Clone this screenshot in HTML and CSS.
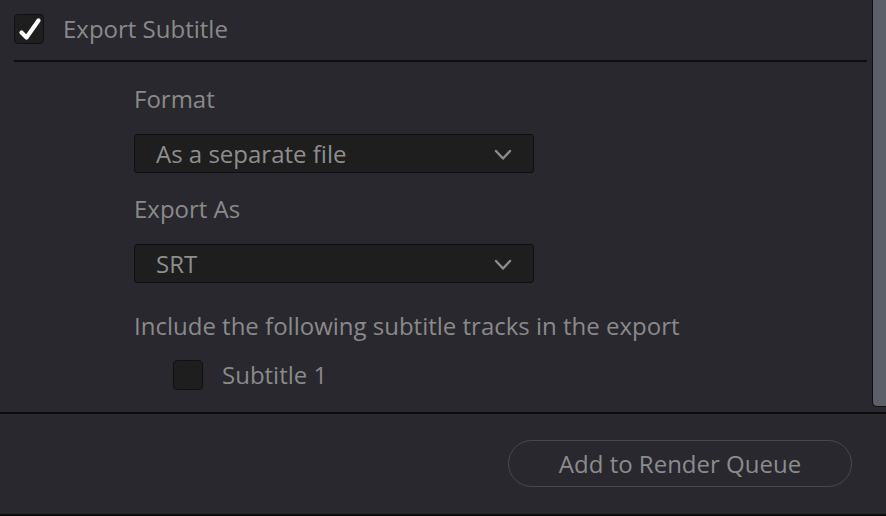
FILE: index.html
```html
<!DOCTYPE html>
<html>
<head>
<meta charset="utf-8">
<link rel="stylesheet" href="styles.css">
</head>
<body>
<div class="app">
  <div class="scroll-area">
    <div class="panel">
      <div class="header">
        <span class="checkbox checked">
          <svg width="30" height="30" viewBox="0 0 30 30"><path d="M7.5 18.5 L12.5 23.5 L24.5 6.5" fill="none" stroke="#ffffff" stroke-width="4.2" stroke-linecap="round" stroke-linejoin="round"/></svg>
        </span>
        <span class="title">Export Subtitle</span>
      </div>
      <div class="content">
        <div class="label">Format</div>
        <div class="select">
          <span class="select-text">As a separate file</span>
          <svg class="chevron" width="18" height="12" viewBox="0 0 18 12"><path d="M2 2 L9 9.5 L16 2" fill="none" stroke="#8c8c8c" stroke-width="2.4" stroke-linecap="round" stroke-linejoin="round"/></svg>
        </div>
        <div class="label label-gap">Export As</div>
        <div class="select">
          <span class="select-text">SRT</span>
          <svg class="chevron" width="18" height="12" viewBox="0 0 18 12"><path d="M2 2 L9 9.5 L16 2" fill="none" stroke="#8c8c8c" stroke-width="2.4" stroke-linecap="round" stroke-linejoin="round"/></svg>
        </div>
        <div class="label label-include">Include the following subtitle tracks in the export</div>
        <div class="track">
          <span class="checkbox small"></span>
          <span class="track-name">Subtitle 1</span>
        </div>
      </div>
    </div>
    <div class="scrollbar"><div class="thumb"></div></div>
  </div>
  <div class="footer">
    <button class="render-btn">Add to Render Queue</button>
  </div>
</div>
</body>
</html>
```
FILE: styles.css
```css
html, body {
  margin: 0;
  padding: 0;
  background: #28282e;
}
body {
  font-family: "Open Sans", "Noto Sans", sans-serif;
  color: #8c8c8c;
  width: 886px;
  height: 516px;
  overflow: hidden;
}
.app {
  display: flex;
  flex-direction: column;
  height: 516px;
}
.scroll-area {
  display: flex;
  flex-direction: row;
  height: 412px;
  border-bottom: 2px solid #0c0c0e;
}
.panel {
  flex: 1;
  display: flex;
  flex-direction: column;
  padding-left: 14px;
  padding-right: 5px;
}
.header {
  height: 60px;
  display: flex;
  align-items: flex-start;
  border-bottom: 2px solid #0e0e10;
}
.checkbox {
  box-sizing: border-box;
  width: 30px;
  height: 30px;
  border: 1.5px solid #101012;
  border-radius: 4px;
  background: #1e1e1f;
  display: flex;
  align-items: center;
  justify-content: center;
}
.checkbox.checked {
  margin-top: 14px;
}
.checkbox.checked svg {
  display: block;
  flex: none;
}
.title {
  font-size: 24px;
  line-height: 33px;
  margin-top: 12px;
  margin-left: 19px;
  color: #8a8a8a;
}
.content {
  padding-left: 120px;
  display: flex;
  flex-direction: column;
  align-items: flex-start;
}
.label {
  font-size: 24px;
  line-height: 30px;
  margin-top: 22px;
  color: #8a8a8a;
}
.label-gap {
  margin-top: 21px;
}
.label-include {
  margin-top: 28px;
}
.select {
  box-sizing: border-box;
  width: 400px;
  height: 39px;
  margin-top: 20px;
  background: #1e1e1f;
  border: 1.5px solid #0e0e10;
  border-radius: 3px;
  display: flex;
  align-items: center;
  justify-content: space-between;
  padding-left: 21px;
  padding-right: 21px;
}
.select-text {
  font-size: 24px;
  line-height: 30px;
  color: #8e8e8e;
}
.chevron {
  display: block;
  margin-top: 2px;
}
.track {
  display: flex;
  align-items: center;
  margin-top: 19px;
  margin-left: 39px;
}
.checkbox.small {
  width: 30px;
  height: 30px;
}
.track-name {
  font-size: 24px;
  line-height: 30px;
  margin-left: 19px;
  color: #8a8a8a;
}
.scrollbar {
  width: 14px;
  display: flex;
  flex-direction: column;
}
.thumb {
  box-sizing: border-box;
  height: 407px;
  background: #5b5f67;
  border-left: 1.5px solid #0e0e10;
  border-bottom: 1.5px solid #0e0e10;
  border-bottom-left-radius: 5px;
}
.footer {
  flex: 1;
  display: flex;
  justify-content: flex-end;
  align-items: flex-start;
  border-bottom: 2px solid #0c0c0e;
}
.render-btn {
  box-sizing: border-box;
  width: 344px;
  height: 47px;
  margin-top: 26px;
  margin-right: 34px;
  border: 1.5px solid #48494e;
  border-radius: 24px;
  background: transparent;
  color: #8c8c8c;
  font-family: "Open Sans", "Noto Sans", sans-serif;
  font-size: 24px;
  line-height: 30px;
  padding: 0;
}
```
